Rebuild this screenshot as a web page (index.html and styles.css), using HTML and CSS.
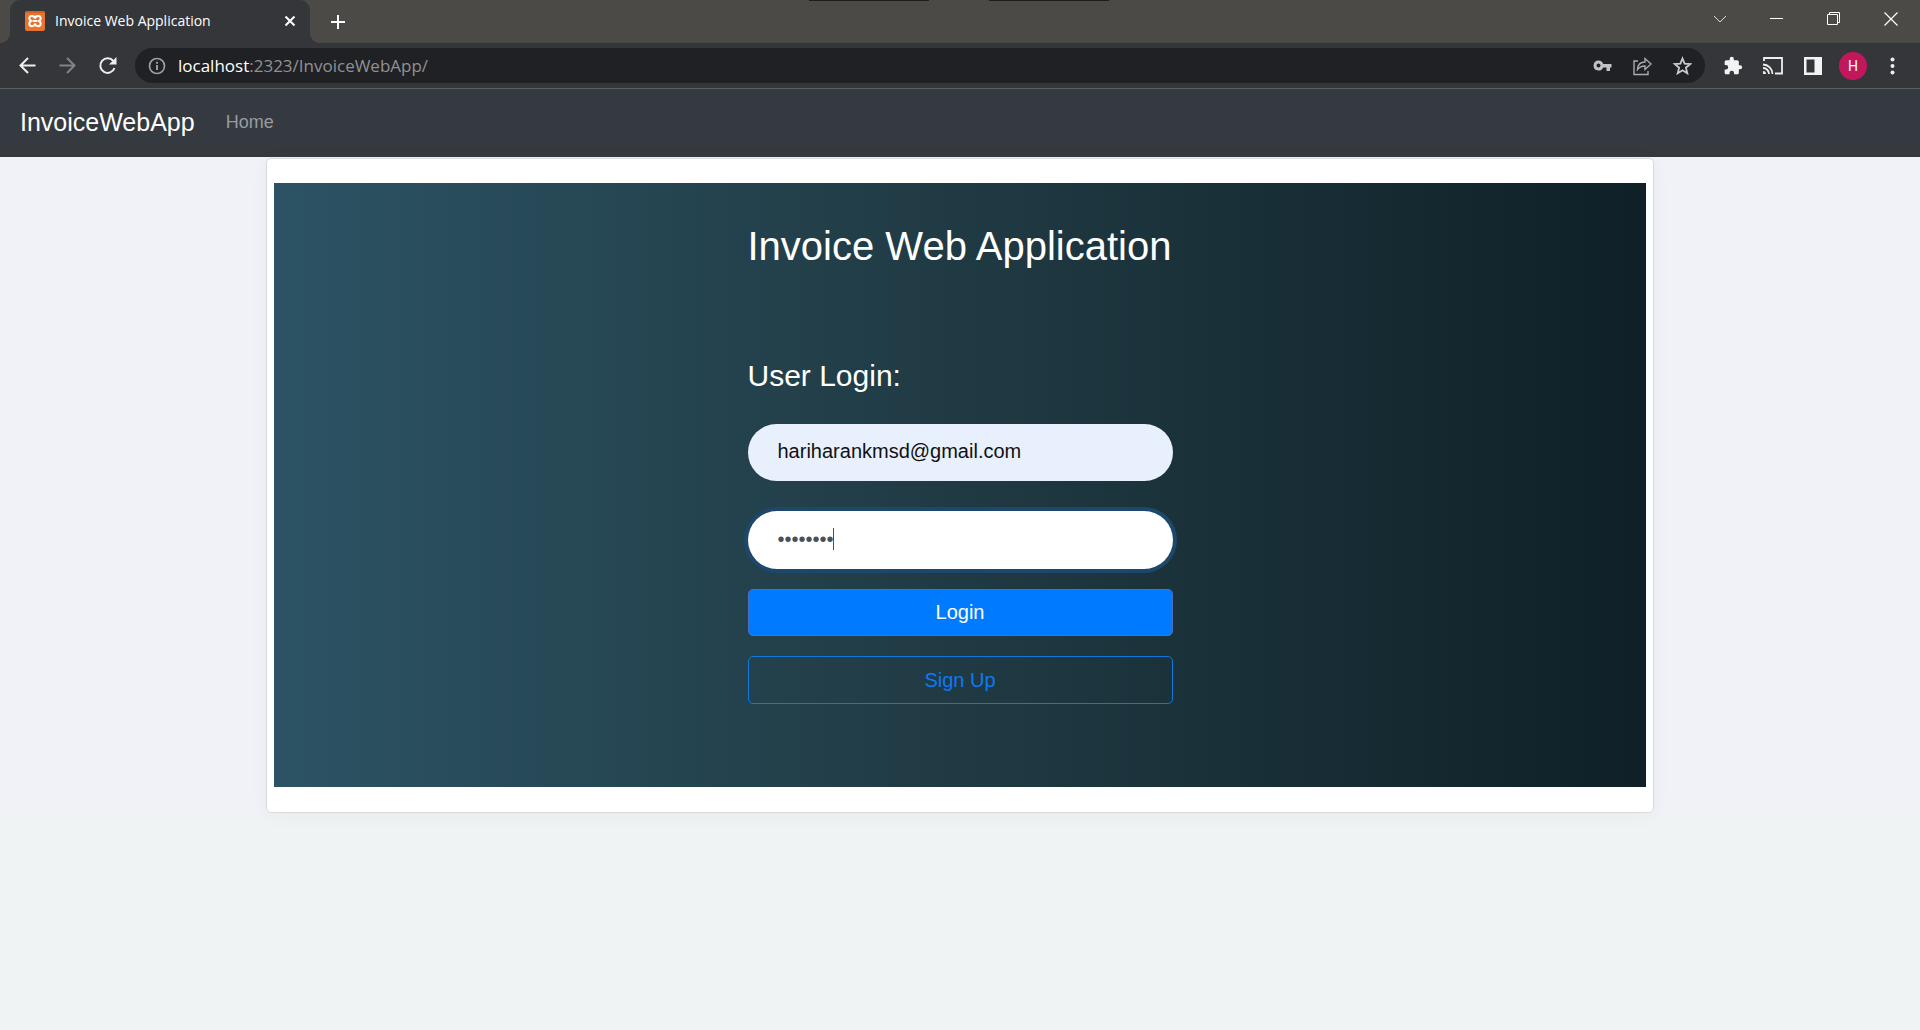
FILE: index.html
```html
<!DOCTYPE html>
<html lang="en">
<head>
<meta charset="utf-8">
<title>Invoice Web Application</title>
<link rel="stylesheet" href="styles.css">
</head>
<body>
<header class="browser">
  <div class="tabstrip">
    <div class="tab">
      <svg class="favicon" viewBox="0 0 20 20" aria-hidden="true"><rect width="20" height="20" rx="2" fill="#e8732c"/><path d="M1 1h18" stroke="#b5561d"/><path d="M10 7.500C9.500 4 4.300 4.300 4.300 7.300c0 1.500.9 2.300 1.700 2.700-1 .4-1.700 1.300-1.700 2.700 0 3.300 5.200 3.300 5.700 0 .5 3.300 5.700 3.300 5.700 0 0-1.400-.7-2.300-1.700-2.700.8-.4 1.700-1.200 1.700-2.700 0-3-5.200-3.300-5.700.2zM8 10h4" fill="none" stroke="#fff" stroke-width="2"/></svg>
      <span class="tab-title">Invoice Web Application</span>
      <button class="icon-btn tab-close" aria-label="Close tab"><svg width="12" height="12" viewBox="0 0 12 12"><path d="M1.500 1.500l9 9M10.500 1.500l-9 9" stroke="#fff" stroke-width="2"/></svg></button>
    </div>
    <button class="icon-btn new-tab" aria-label="New tab"><svg width="16" height="16" viewBox="0 0 16 16"><path d="M8 1v14M1 8h14" stroke="#fff" stroke-width="2"/></svg></button>
    <div class="window-controls">
      <button class="icon-btn" aria-label="Search tabs"><svg width="14" height="14" viewBox="0 0 14 14"><path d="M1 4l6 6 6-6" fill="none" stroke="#ddd"/></svg></button>
      <button class="icon-btn" aria-label="Minimize"><svg width="14" height="14" viewBox="0 0 14 14"><path d="M0 6.500h13" stroke="#fff"/></svg></button>
      <button class="icon-btn" aria-label="Restore"><svg width="14" height="14" viewBox="0 0 14 14"><path d="M.5 2.500h10v10H.5zM2.500 2.500v-2h10v10h-2" fill="none" stroke="#fff"/></svg></button>
      <button class="icon-btn" aria-label="Close"><svg width="14" height="14" viewBox="0 0 14 14"><path d="M.5.5l13 13M13.500.5l-13 13" stroke="#fff" stroke-width="1.200"/></svg></button>
    </div>
    <div class="edge-mark edge-mark-left"></div>
    <div class="edge-mark edge-mark-right"></div>
  </div>
  <div class="toolbar">
    <div class="nav-buttons">
      <button class="icon-btn" aria-label="Back"><svg width="20" height="20" viewBox="0 0 20 20"><path d="M18.500 9.500H4M11 2L3.500 9.500 11 17" fill="none" stroke="#eee" stroke-width="2"/></svg></button>
      <button class="icon-btn" aria-label="Forward"><svg width="20" height="20" viewBox="0 0 20 20"><path d="M2.500 9.500H17M10 2l7.500 7.500L10 17" fill="none" stroke="#818386" stroke-width="2"/></svg></button>
      <button class="icon-btn" aria-label="Reload"><svg width="20" height="20" viewBox="0 0 20 20"><path d="M16.300 5A7.300 7.300 0 1 0 17.500 12" fill="none" stroke="#eee" stroke-width="2"/><path d="M19.500 1v7.500H12z" fill="#eee"/></svg></button>
    </div>
    <div class="omnibox">
      <svg width="18" height="18" viewBox="0 0 18 18" aria-hidden="true"><circle cx="9" cy="9" r="7.500" fill="none" stroke="#9aa0a6" stroke-width="1.700"/><path d="M9 8v5M9 4.700v2" stroke="#9aa0a6" stroke-width="1.900"/></svg>
      <div class="url"><span class="url-host">localhost</span>:2323/InvoiceWebApp/</div>
      <button class="icon-btn" aria-label="Passwords"><svg width="20" height="20" viewBox="0 0 20 20"><path fill-rule="evenodd" d="M6.500 4.500a5 5 0 1 0 4.700 7h3.300V15h3.500v-3.500h1.500v-3.500h-8.300a5 5 0 0 0-4.700-3.500zM6.500 7.500a2 2 0 1 1 0 4 2 2 0 0 1 0-4z" fill="#c0c2c5"/></svg></button>
      <button class="icon-btn" aria-label="Share"><svg width="20" height="20" viewBox="0 0 20 20"><path d="M6 5H2v13.500h14V15M5.500 13.500c.3-5 3-7.500 7.500-7.500V2.500l6 5.500-6 5.500V10c-3.500 0-5.500.8-7.500 3.500z" fill="none" stroke="#a9abae" stroke-width="1.400"/></svg></button>
      <button class="icon-btn" aria-label="Bookmark"><svg width="20" height="20" viewBox="0 0 20 20"><path d="M10.500 2.500l2.100 5.200 5.600.4-4.300 3.600 1.400 5.500-4.800-3-4.800 3 1.400-5.500-4.300-3.600 5.600-.4z" fill="none" stroke="#c8cacc" stroke-width="1.800"/></svg></button>
    </div>
    <div class="toolbar-actions">
      <button class="icon-btn" aria-label="Extensions"><svg width="20" height="20" viewBox="0 0 24 24"><path d="M20.500 11H19V7c0-1.100-.9-2-2-2h-4V3.500a2.500 2.500 0 0 0-5 0V5H4c-1.100 0-2 .9-2 2v3.800h1.500a2.700 2.700 0 0 1 0 5.400H2V20c0 1.100.9 2 2 2h3.800v-1.500a2.700 2.700 0 0 1 5.400 0V22H17c1.100 0 2-.9 2-2v-4h1.500a2.500 2.500 0 0 0 0-5z" fill="#f1f3f4"/></svg></button>
      <button class="icon-btn" aria-label="Cast"><svg width="20" height="20" viewBox="0 0 20 20"><path d="M1 5V2h18v15.500h-7M0 8.500a9.500 9.500 0 0 1 9.500 9.500M0 12a6 6 0 0 1 6 6" fill="none" stroke="#eee" stroke-width="1.800"/><path d="M0 15a3 3 0 0 1 3 3H0z" fill="#eee"/></svg></button>
      <button class="icon-btn" aria-label="Side panel"><svg width="20" height="20" viewBox="0 0 20 20"><path fill-rule="evenodd" d="M1 1h18v18H1zM3.500 3.500v13H11.500v-13z" fill="#f1f3f4"/></svg></button>
      <button class="icon-btn avatar" aria-label="Profile">H</button>
      <button class="icon-btn" aria-label="Menu"><svg width="20" height="20" viewBox="0 0 20 20"><g fill="#eee"><circle cx="9.500" cy="3.500" r="2"/><circle cx="9.500" cy="10" r="2"/><circle cx="9.500" cy="16.500" r="2"/></g></svg></button>
    </div>
  </div>
</header>
<nav class="navbar">
  <a class="brand" href="#">InvoiceWebApp</a>
  <a class="nav-link" href="#">Home</a>
</nav>
<main class="page">
  <section class="card">
    <div class="hero">
      <form class="login">
        <h1 class="title">Invoice Web Application</h1>
        <h2 class="subtitle">User Login:</h2>
        <input class="field field-email" type="email" aria-label="Email" value="hariharankmsd@gmail.com">
        <div class="password">
          <input class="field field-password" type="password" aria-label="Password" value="password">
          <span class="caret"></span>
        </div>
        <button class="btn btn-primary" type="button">Login</button>
        <button class="btn btn-outline" type="button">Sign Up</button>
      </form>
    </div>
  </section>
</main>
</body>
</html>
```
FILE: styles.css
```css
* { box-sizing: border-box; }
body {
  margin: 0;
  min-height: 100vh;
  background: #eff3f4;
  font-family: "Liberation Sans", Arial, sans-serif;
}
button, input { font: inherit; }
svg { display: block; flex: none; }
.browser { font-family: "Open Sans", "Noto Sans", sans-serif; }
.icon-btn {
  display: flex;
  align-items: center;
  justify-content: center;
  padding: 0;
  border: 0;
  background: none;
}
.tabstrip {
  position: relative;
  display: flex;
  height: 43px;
  padding: 0 1px 0 10px;
  background: #4b4a47;
}
.tab {
  position: relative;
  display: flex;
  align-items: center;
  width: 300px;
  padding: 0 14px 2px 15px;
  border-radius: 10px 10px 0 0;
  background: #35363a;
  color: #fff;
  font-size: 14px;
}
.tab::before, .tab::after {
  content: "";
  position: absolute;
  bottom: 0;
  width: 10px;
  height: 10px;
}
.tab::before {
  right: 100%;
  background: radial-gradient(circle at 0 0, transparent 10px, #35363a 10px);
}
.tab::after {
  left: 100%;
  background: radial-gradient(circle at 100% 0, transparent 10px, #35363a 10px);
}
.favicon { width: 20px; height: 20px; }
.tab-title { flex: 1; margin-left: 10px; white-space: nowrap; }
.new-tab { width: 16px; margin-left: 20px; }
.window-controls { display: flex; margin-left: auto; }
.window-controls .icon-btn { width: 57px; height: 37px; }
.edge-mark { position: absolute; top: 0; width: 120px; height: 1px; background: #1d1d1c; }
.edge-mark-left { left: 809px; }
.edge-mark-right { left: 989px; }
.toolbar {
  display: flex;
  align-items: center;
  height: 46px;
  padding: 0 17px;
  border-bottom: 1px solid #5d5f62;
  background: #35363a;
}
.nav-buttons, .toolbar-actions { display: flex; align-items: center; gap: 20px; }
.omnibox {
  flex: 1;
  display: flex;
  align-items: center;
  gap: 20px;
  height: 35px;
  margin: 0 18px;
  padding: 0 13px;
  border-radius: 18px;
  background: #202124;
}
.url { flex: 1; margin-left: -8px; color: #8f9195; font-size: 17px; }
.url-host { color: #fff; }
.avatar {
  width: 28px;
  height: 28px;
  margin: 0 -4px;
  border-radius: 50%;
  background: #c2185b;
  color: #fff;
  font-family: Roboto, sans-serif;
  font-size: 14px;
}
.navbar {
  display: flex;
  align-items: center;
  gap: 31px;
  height: 68px;
  padding: 0 20px 1px;
  background: #343a40;
}
.brand { color: #fff; font-size: 25px; text-decoration: none; }
.nav-link { color: #999c9f; font-size: 18px; text-decoration: none; }
.page {
  padding: 1px 266px 0;
  background: #f1f2f8;
}
.card {
  padding: 24px 7px 25px;
  border: 1px solid #d9dadc;
  border-radius: 5px;
  background: #fff;
  box-shadow: 0 2px 20px rgba(0, 0, 0, 0.04);
}
.hero {
  display: flex;
  justify-content: center;
  padding: 39px 20px 83px;
  background: linear-gradient(to right, #2c5364, #203a43, #0f2027);
}
.login { display: flex; flex-direction: column; width: 425px; color: #fff; }
.title, .subtitle { margin: 0; font-weight: 400; white-space: nowrap; }
.title { font-size: 40px; line-height: 48px; }
.subtitle { margin: 88px 0 30px; font-size: 30px; line-height: 36px; }
.field {
  width: 100%;
  height: 58px;
  padding: 0 30px 2px;
  border: 0;
  border-radius: 29px;
  outline: 0;
  font-size: 20px;
}
.field-email { height: 57px; background: #e8f0fe; color: #111; }
.password { position: relative; margin: 30px 0 20px; }
.field-password {
  display: block;
  background: #fff;
  color: #495057;
  box-shadow: 0 0 0 4px #1d486c;
}
.caret {
  position: absolute;
  top: 17px;
  left: 85px;
  width: 1px;
  height: 22px;
  background: #495057;
}
.btn {
  height: 47px;
  padding: 0;
  border: 1px solid #007bff;
  border-radius: 5px;
  font-size: 20px;
}
.btn-primary { border-color: #4a70c4; background: #007bff; color: #fff; }
.btn-outline { height: 48px; margin-top: 20px; border-color: #1077dd; background: transparent; color: #0d78f5; }
```
